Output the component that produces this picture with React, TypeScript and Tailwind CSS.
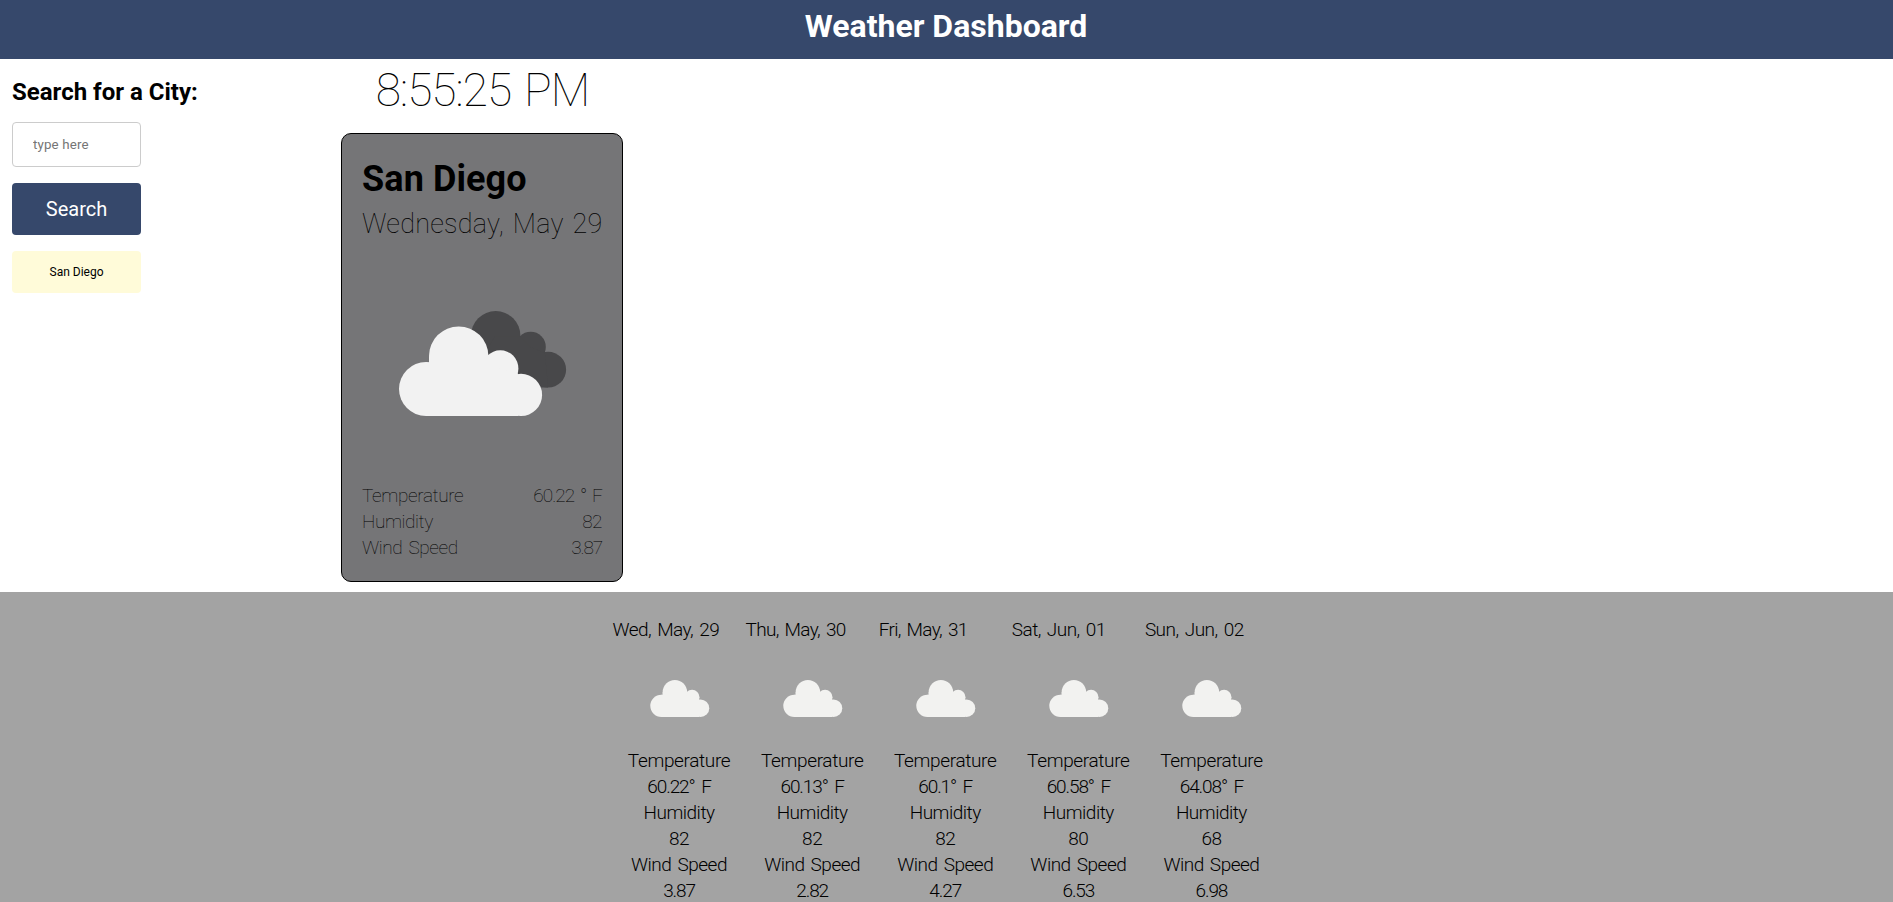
type Reading = { text: string; spacing: string };

type Day = {
  date: Reading;
  temperature: string;
  humidity: string;
  wind: string;
};

const days: Day[] = [
  { date: { text: "Wed, May, 29", spacing: "tracking-[-0.55px]" }, temperature: "60.22° F", humidity: "82", wind: "3.87" },
  { date: { text: "Thu, May, 30", spacing: "tracking-[-0.7px]" }, temperature: "60.13° F", humidity: "82", wind: "2.82" },
  { date: { text: "Fri, May, 31", spacing: "tracking-[-0.7px]" }, temperature: "60.1° F", humidity: "82", wind: "4.27" },
  { date: { text: "Sat, Jun, 01", spacing: "tracking-[-0.55px]" }, temperature: "60.58° F", humidity: "80", wind: "6.53" },
  { date: { text: "Sun, Jun, 02", spacing: "tracking-[-0.52px]" }, temperature: "64.08° F", humidity: "68", wind: "6.98" },
];

function CloudShape({ fill }: { fill: string }) {
  return (
    <g fill={fill}>
      <circle cx="59.7" cy="29.7" r="29.7" />
      <circle cx="27" cy="62.6" r="27" />
      <circle cx="101.3" cy="42" r="18.1" />
      <circle cx="122" cy="68.5" r="21.1" />
      <path d="M27 89.6V36h3V30h58v8l13 4 18 5v42.6z" />
    </g>
  );
}

function BrokenClouds() {
  return (
    <svg viewBox="0 0 238 239" className="block h-[239px] w-[238px]" aria-hidden="true">
      <g transform="translate(1 0.2)">
        <g fill="#48484a">
          <circle cx="132.7" cy="91.6" r="24.7" />
          <circle cx="167.7" cy="102.7" r="15.1" />
          <circle cx="185.2" cy="125.5" r="17.9" />
          <path d="M132 92h25l11 11 14 6 3 34.4h-30l-30-40z" />
        </g>
        <g transform="translate(36 82.2)">
          <CloudShape fill="#f2f2f2" />
        </g>
      </g>
    </svg>
  );
}

function SmallCloud() {
  return (
    <svg viewBox="0 0 100 105" className="block h-[105px] w-[100px]" aria-hidden="true">
      <g transform="translate(21.3 37) scale(0.412)">
        <CloudShape fill="#f2f2f0" />
      </g>
    </svg>
  );
}

function CurrentRow({ label, value }: { label: Reading; value: Reading }) {
  return (
    <div className="flex justify-between">
      <span className={label.spacing}>{label.text}</span>
      <span className={value.spacing}>{value.text}</span>
    </div>
  );
}

export default function App() {
  return (
    <div className="h-[902px] overflow-hidden bg-white font-['Roboto',sans-serif] text-black">
      <header className="h-[59px] bg-[#36486b] pr-px text-center text-white">
        <h1 className="text-[32px] leading-[52px] font-bold">Weather Dashboard</h1>
      </header>

      <main className="flex h-[533px]">
        <aside className="w-[341px] pt-[19px] pl-3">
          <h2 className="text-2xl leading-7 font-bold">Search for a City:</h2>
          <div className="mt-4 flex w-[129px] flex-col gap-4">
            <input
              type="text"
              placeholder="type here"
              className="h-[45px] w-full rounded border border-[#cccccc] px-5 text-[13.33px] tracking-[0.15px] placeholder:text-[#757575]"
            />
            <button className="h-[52px] rounded bg-[#36486b] text-xl text-white">Search</button>
            <button className="h-[42px] rounded bg-[#fffbd9] text-xs">San Diego</button>
          </div>
        </aside>

        <section className="w-[282px] pt-px">
          <div className="pl-px text-center text-[46px] leading-[60px] font-thin tracking-[-1px] [word-spacing:3px]">8:55:25 PM</div>
          <article className="mt-[13px] h-[449px] rounded-[10px] border border-black bg-[#757577] pt-[23px] pr-[20px] pl-[20px]">
            <h2 className="text-4xl leading-[44px] font-bold tracking-[0.1px]">San Diego</h2>
            <p className="mt-[3px] text-[27px] leading-10 font-thin tracking-[0.25px] whitespace-nowrap [word-spacing:2px]">Wednesday, May 29</p>
            <BrokenClouds />
            <div className="text-[19px] leading-[26px] font-thin">
              <CurrentRow
                label={{ text: "Temperature", spacing: "tracking-[-0.35px]" }}
                value={{ text: "60.22 ° F", spacing: "tracking-[-0.9px] [word-spacing:2px]" }}
              />
              <CurrentRow
                label={{ text: "Humidity", spacing: "tracking-[-0.4px]" }}
                value={{ text: "82", spacing: "tracking-[-0.5px]" }}
              />
              <CurrentRow
                label={{ text: "Wind Speed", spacing: "tracking-[-0.4px] [word-spacing:2px]" }}
                value={{ text: "3.87", spacing: "tracking-[-1.1px]" }}
              />
            </div>
          </article>
        </section>
      </main>

      <section className="h-[310px] bg-[#a3a3a3] pt-[24.5px] pl-[612.5px] text-[19px] leading-[26px] font-light">
        <div className="grid grid-cols-[repeat(5,133.1px)]">
          {days.map((day) => (
            <div key={day.date.text} className="flex flex-col items-center">
              <div className={`${day.date.spacing} self-start [word-spacing:2px]`}>{day.date.text}</div>
              <SmallCloud />
              <div className="tracking-[-0.35px]">Temperature</div>
              <div className="tracking-[-1.1px] [word-spacing:3px]">{day.temperature}</div>
              <div className="tracking-[-0.5px]">Humidity</div>
              <div className="tracking-[-0.5px]">{day.humidity}</div>
              <div className="tracking-[-0.5px] [word-spacing:2px]">Wind Speed</div>
              <div className="tracking-[-1.1px]">{day.wind}</div>
            </div>
          ))}
        </div>
      </section>
    </div>
  );
}
